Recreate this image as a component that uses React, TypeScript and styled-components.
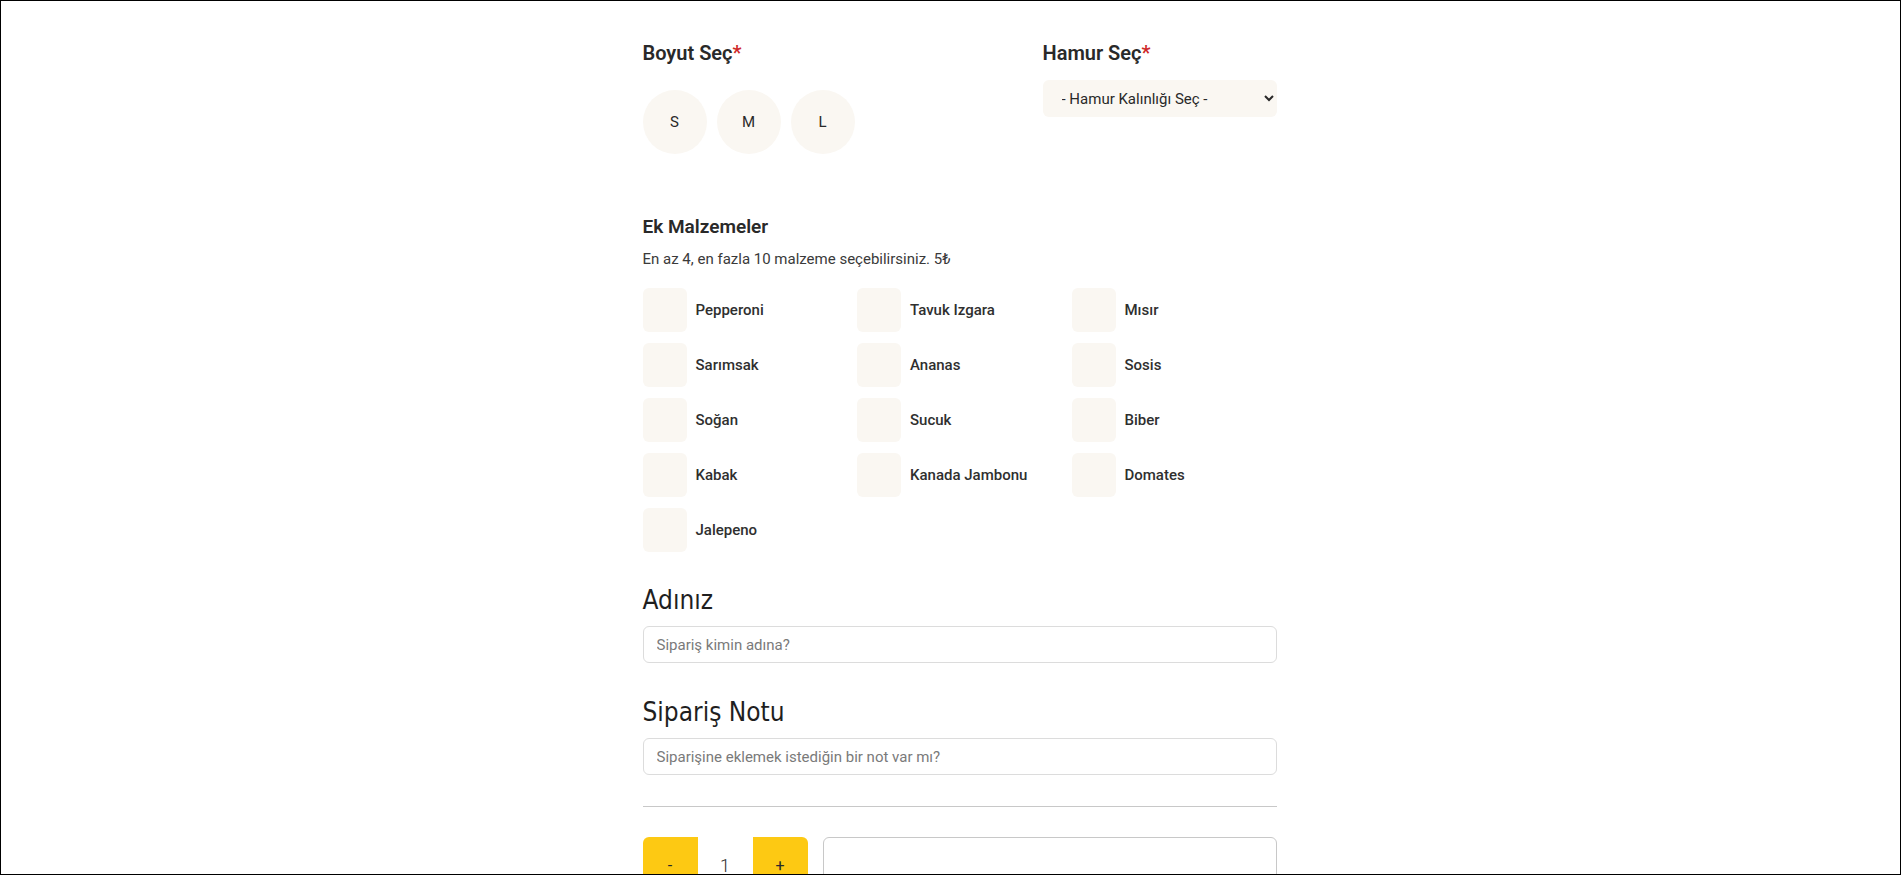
import styled, { createGlobalStyle } from "styled-components";

const GlobalStyle = createGlobalStyle`
    * {
        box-sizing: border-box;
    }
    body {
        margin: 0;
        background: #ffffff;
        font-family: "Roboto", "Liberation Sans", sans-serif;
        color: #292929;
    }
`

const sizes = ["S", "M", "L"];

const toppings = [
    "Pepperoni", "Tavuk Izgara", "Mısır",
    "Sarımsak", "Ananas", "Sosis",
    "Soğan", "Sucuk", "Biber",
    "Kabak", "Kanada Jambonu", "Domates",
    "Jalepeno",
];

export default function App() {
    return (
        <>
            <GlobalStyle/>
            <Frame>
                <Wrapper>
                    <Form>
                        <TopRow>
                            <div>
                                <SectionTitle>Boyut Seç<Star>*</Star></SectionTitle>
                                <SizeList>
                                    {sizes.map((s) => (
                                        <SizeButton key={s} type="button">{s}</SizeButton>
                                    ))}
                                </SizeList>
                            </div>
                            <div>
                                <SectionTitle>Hamur Seç<Star>*</Star></SectionTitle>
                                <DoughSelect defaultValue="">
                                    <option value="">- Hamur Kalınlığı Seç -</option>
                                    <option value="ince">İnce</option>
                                    <option value="orta">Orta</option>
                                    <option value="kalin">Kalın</option>
                                </DoughSelect>
                            </div>
                        </TopRow>

                        <ExtrasTitle>Ek Malzemeler</ExtrasTitle>
                        <Hint>En az 4, en fazla 10 malzeme seçebilirsiniz. 5₺</Hint>
                        <ToppingGrid>
                            {toppings.map((t) => (
                                <ToppingItem key={t}>
                                    <ToppingBox type="checkbox"/>
                                    {t}
                                </ToppingItem>
                            ))}
                        </ToppingGrid>

                        <FieldTitle $gap={31}>Adınız</FieldTitle>
                        <TextInput placeholder="Sipariş kimin adına?"/>

                        <FieldTitle $gap={32}>Sipariş Notu</FieldTitle>
                        <TextInput placeholder="Siparişine eklemek istediğin bir not var mı?"/>

                        <Divider/>

                        <OrderRow>
                            <Counter>
                                <CountButton type="button" $side="left">-</CountButton>
                                <CountValue>1</CountValue>
                                <CountButton type="button" $side="right">+</CountButton>
                            </Counter>
                            <SummaryCard/>
                        </OrderRow>
                    </Form>
                </Wrapper>
            </Frame>
        </>
    );
}

const Frame = styled.div`
    height: 100vh;
    border: 1px solid #000000;
    overflow: hidden;
`
const Wrapper = styled.div`
    display: flex;
    justify-content: center;
    padding-left: 18px;
`
const Form = styled.form`
    width: 634px;
    padding-top: 39px;
    display: flex;
    flex-direction: column;
`
const TopRow = styled.div`
    display: flex;
    justify-content: space-between;
`
const SectionTitle = styled.h3`
    margin: 0;
    font-size: 20px;
    line-height: 26px;
    font-weight: 600;
    color: #292929;
`
const Star = styled.span`
    color: #ce2829;
`
const SizeList = styled.div`
    display: flex;
    gap: 10px;
    margin-top: 24px;
`
const SizeButton = styled.button`
    width: 64px;
    height: 64px;
    border-radius: 50%;
    border: none;
    background: #faf7f2;
    font-family: "Roboto", sans-serif;
    font-size: 15px;
    font-weight: 400;
    color: #292929;
    cursor: pointer;
`
const DoughSelect = styled.select`
    margin-top: 14px;
    width: 234px;
    height: 37px;
    padding: 0 8px 0 15px;
    border: none;
    border-radius: 6px;
    background: #faf7f2;
    font-family: "Roboto", sans-serif;
    font-size: 15px;
    color: #292929;
`
const ExtrasTitle = styled.h3`
    margin: 61px 0 0;
    font-size: 19px;
    line-height: 24px;
    font-weight: 600;
`
const Hint = styled.p`
    margin: 10px 0 0;
    font-size: 15px;
    line-height: 20px;
    color: #3a3a3a;
`
const ToppingGrid = styled.div`
    display: grid;
    grid-template-columns: repeat(3, 214.5px);
    row-gap: 11px;
    margin-top: 19px;
`
const ToppingItem = styled.label`
    display: flex;
    align-items: center;
    gap: 9px;
    font-size: 15px;
    font-weight: 500;
    color: #2f2f2f;
`
const ToppingBox = styled.input`
    appearance: none;
    margin: 0;
    width: 44px;
    height: 44px;
    border-radius: 6px;
    background: #faf7f2;
    cursor: pointer;
`
const FieldTitle = styled.h2<{ $gap: number }>`
    margin: ${({$gap}) => $gap}px 0 0;
    font-family: "Liberation Sans Narrow", "DejaVu Sans Condensed", "Roboto", sans-serif;
    font-size: 26px;
    line-height: 34px;
    font-weight: 400;
    color: #1f1f1f;
`
const TextInput = styled.input`
    margin-top: 9px;
    width: 100%;
    height: 37px;
    padding: 0 13px;
    border: 1px solid #dcdcdc;
    border-radius: 6px;
    font-family: "Roboto", sans-serif;
    font-size: 15px;
    color: #292929;

    &::placeholder {
        color: #7a7a7a;
    }
`
const Divider = styled.hr`
    margin: 31px 0 0;
    border: none;
    border-top: 1px solid #c8c8c8;
`
const OrderRow = styled.div`
    display: flex;
    align-items: flex-start;
    gap: 15px;
    margin-top: 30px;
`
const Counter = styled.div`
    display: flex;
`
const CountButton = styled.button<{ $side: "left" | "right" }>`
    width: 55px;
    height: 56px;
    border: none;
    background: #fdc913;
    border-radius: ${({$side}) => $side === "left" ? "6px 0 0 6px" : "0 6px 6px 0"};
    font-family: "Roboto", sans-serif;
    font-size: 16px;
    color: #292929;
    cursor: pointer;
`
const CountValue = styled.span`
    width: 55px;
    height: 56px;
    display: flex;
    align-items: center;
    justify-content: center;
    font-size: 18px;
    font-weight: 300;
    color: #292929;
`
const SummaryCard = styled.div`
    flex: 1;
    height: 220px;
    border: 1px solid #c8c8c8;
    border-radius: 6px;
`
